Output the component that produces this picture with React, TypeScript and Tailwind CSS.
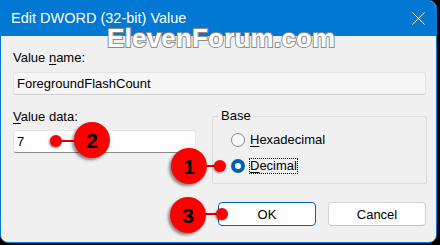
import React from "react";

function Bubble({ n, cx, cy, dx, dy }: { n: string; cx: number; cy: number; dx: number; dy: number }) {
  const left = Math.min(cx, dx);
  const width = Math.abs(cx - dx);
  return (
    <>
      <div
        className="absolute h-[2px] bg-[#e00000]"
        style={{ left, top: dy - 1, width }}
      />
      <div
        className="absolute w-[12px] h-[12px] rounded-full bg-[#ff0000] shadow-[-1px_1px_2px_rgba(0,0,0,0.45)]"
        style={{ left: dx - 6, top: dy - 6 }}
      />
      <div
        className="absolute w-[36px] h-[36px] rounded-full bg-[#ff0000] shadow-[-2px_2px_3px_rgba(0,0,0,0.45)] flex items-center justify-center text-black font-bold text-[21px] leading-none font-['Liberation_Sans',Arial,sans-serif]"
        style={{ left: cx - 18, top: cy - 18 }}
      >
        {n}
      </div>
    </>
  );
}

export default function App() {
  return (
    <div className="relative w-[440px] h-[245px] bg-black overflow-hidden font-['Liberation_Sans',Arial,sans-serif] text-[13px] text-black">
      <div className="w-[437px] h-[243px] border border-[#0078d4] rounded-tr-[8px] rounded-b-[8px] bg-[#f0f0f0] overflow-hidden flex flex-col">
        {/* Title bar */}
        <div className="h-[35px] shrink-0 bg-[#0078d4] flex items-center pl-[10px] pr-[11px] text-white">
          <span className="text-[14.5px] leading-none">Edit DWORD (32-bit) Value</span>
          <svg className="ml-auto" width="13" height="13" viewBox="0 0 13 13">
            <path d="M0.5 0.5 L12.5 12.5 M12.5 0.5 L0.5 12.5" stroke="white" strokeWidth="1" />
          </svg>
        </div>

        {/* Body */}
        <div className="flex flex-col pl-[12px] pr-[10px]">
          <div className="mt-[14px] leading-[16px]">
            Value <span className="underline underline-offset-2">n</span>ame:
          </div>
          <div className="mt-[6px] h-[23px] w-[413px] bg-[#f6f6f6] border border-[#e3e3e3] border-b-[#cfcfcf] rounded-[3px] flex items-center pl-[3px] leading-none">
            ForegroundFlashCount
          </div>

          <div className="mt-[13px] flex items-start">
            <div className="flex flex-col pt-[1px]">
              <div className="leading-[16px]">
                <span className="underline underline-offset-2">V</span>alue data:
              </div>
              <div className="mt-[5px] h-[23px] w-[183px] bg-[#fdfdfd] border border-[#e5e5e5] border-b-[#8a8a8a] rounded-[3px] flex items-center pl-[3px] leading-none">
                7
              </div>
            </div>

            <fieldset className="ml-auto -mr-[1px] w-[215px] h-[76px] border border-[#dcdcdc] rounded-[2px] p-0 m-0">
              <legend className="ml-[5px] px-[3px] leading-[16px]">Base</legend>
              <div className="flex flex-col pt-[8px] pl-[18px] gap-[10px]">
                <div className="flex items-center h-[16px]">
                  <div className="w-[14px] h-[14px] rounded-full border border-[#8a8a8a] bg-[#f7f7f7]" />
                  <span className="ml-[4px] border border-transparent px-[0px] leading-[14px]">
                    <span className="underline underline-offset-2">H</span>exadecimal
                  </span>
                </div>
                <div className="flex items-center h-[16px]">
                  <div className="w-[14px] h-[14px] rounded-full bg-[#005fb8] flex items-center justify-center">
                    <div className="w-[6px] h-[6px] rounded-full bg-white" />
                  </div>
                  <span className="ml-[4px] border border-dotted border-black px-[0px] leading-[14px]">
                    <span className="underline underline-offset-2">D</span>ecimal
                  </span>
                </div>
              </div>
            </fieldset>
          </div>

          <div className="mt-[18px] flex justify-end gap-[12px]">
            <button className="w-[98px] h-[24px] bg-[#fdfdfd] border border-[#0067c0] rounded-[4px] leading-none">
              OK
            </button>
            <button className="w-[98px] h-[24px] bg-[#fdfdfd] border border-[#d4d4d4] border-b-[#c0c0c0] rounded-[4px] leading-none">
              Cancel
            </button>
          </div>
        </div>
      </div>

      {/* Watermark */}
      <div className="absolute left-[107px] top-[25px] text-[26px] leading-[26px] font-bold text-white [-webkit-text-stroke:2px_#8c8c8c] [paint-order:stroke_fill] tracking-[0.2px] whitespace-nowrap">
        ElevenForum.com
      </div>

      {/* Annotations */}
      <Bubble n="2" cx={92} cy={140} dx={56} dy={141} />
      <Bubble n="1" cx={189} cy={166} dx={220} dy={166} />
      <Bubble n="3" cx={188} cy={215} dx={222} dy={214} />
    </div>
  );
}
